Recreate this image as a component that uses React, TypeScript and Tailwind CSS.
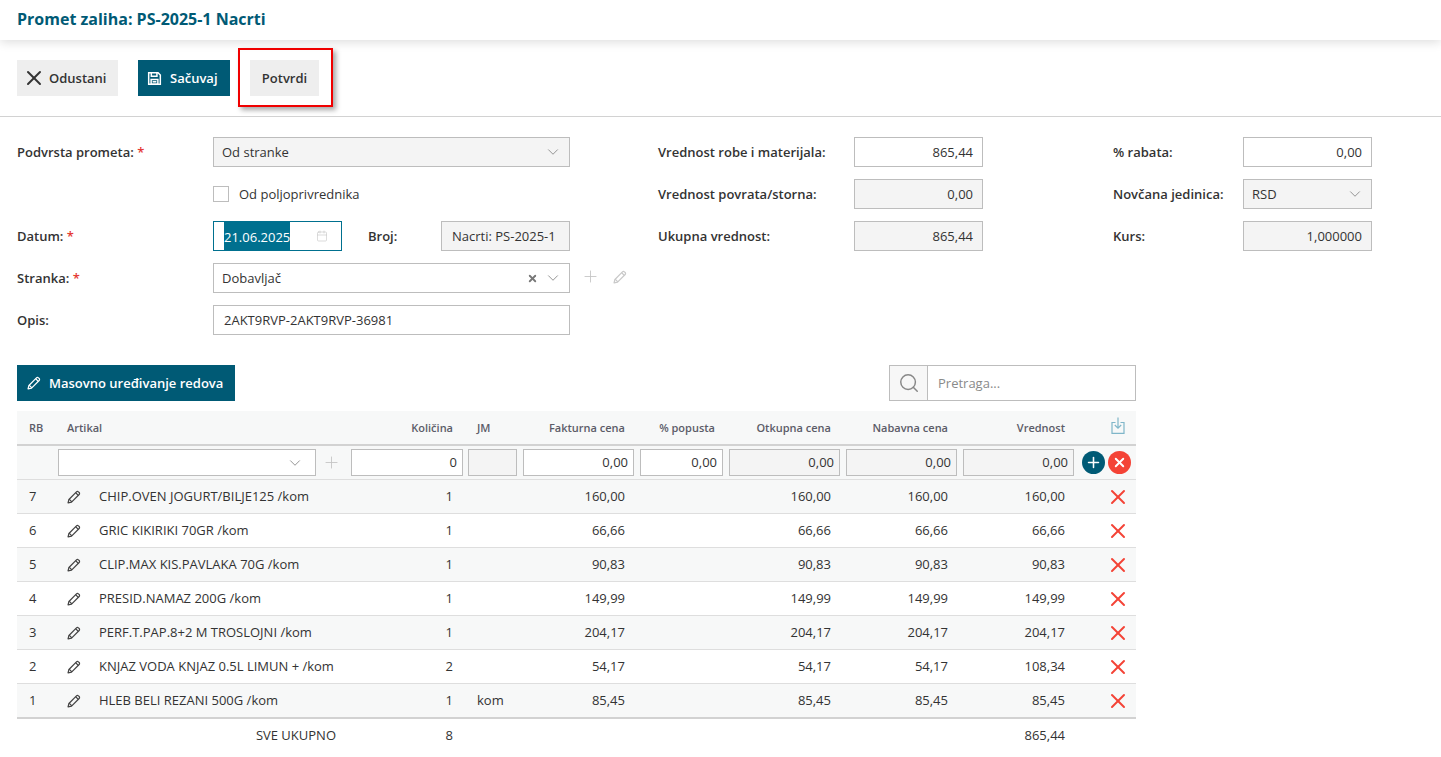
import React from "react";
import { ChevronDown, Plus, Calendar, Search, X } from "lucide-react";

const Pencil = ({ className = "" }: { className?: string }) => (
  <svg viewBox="0 0 16 16" width="14" height="14" fill="none" stroke="currentColor" strokeWidth="1.4" strokeLinejoin="round" className={`shrink-0 ${className}`}>
    <path d="M1.2 14.8l1-4 8.6-8.7c.7-.7 1.7-.7 2.3 0l.8.8c.6.6.6 1.6 0 2.2l-8.7 8.7z" />
    <path d="M2.4 10.4l3.2 3.2M9.9 3.2l3 3" />
  </svg>
);

const SaveIcon = () => (
  <svg viewBox="0 0 16 16" width="15" height="15" fill="none" stroke="currentColor" strokeWidth="1.6">
    <path d="M1.8 1.8h10l2.4 2.4v10H1.8z" />
    <path d="M4.6 2v3.6h6V2M4.4 9h7.2v5H4.4z" />
    <path d="M6 11.5h4" />
  </svg>
);

const Label = ({ children, req }: { children: React.ReactNode; req?: boolean }) => (
  <span className="block pt-[2px] font-semibold text-[13px] text-[#333]">
    {children}
    {req && <span className="text-[#e53935]"> *</span>}
  </span>
);

const Field = ({ value, gray, className = "" }: { value: string; gray?: boolean; className?: string }) => (
  <div className={`h-[30px] border border-[#bdbdbd] flex items-center justify-end px-[9px] pt-[2px] text-[13px] text-[#333] ${gray ? "bg-[#f4f4f4]" : "bg-white"} ${className}`}>
    {value}
  </div>
);

const Chevron = () => <ChevronDown size={18} strokeWidth={1.2} className="text-[#8a8a8a] shrink-0" />;

const rows = [
  ["7", "CHIP.OVEN JOGURT/BILJE125 /kom", "1", "", "160,00", "160,00", "160,00", "160,00"],
  ["6", "GRIC KIKIRIKI 70GR /kom", "1", "", "66,66", "66,66", "66,66", "66,66"],
  ["5", "CLIP.MAX KIS.PAVLAKA 70G /kom", "1", "", "90,83", "90,83", "90,83", "90,83"],
  ["4", "PRESID.NAMAZ 200G /kom", "1", "", "149,99", "149,99", "149,99", "149,99"],
  ["3", "PERF.T.PAP.8+2 M TROSLOJNI /kom", "1", "", "204,17", "204,17", "204,17", "204,17"],
  ["2", "KNJAZ VODA KNJAZ 0.5L LIMUN + /kom", "2", "", "54,17", "54,17", "54,17", "108,34"],
  ["1", "HLEB BELI REZANI 500G /kom", "1", "kom", "85,45", "85,45", "85,45", "85,45"],
];

const gridCols = "grid grid-cols-[38px_293px_118px_54px_117px_89px_117px_117px_117px_59px] items-center";

const MiniInput = ({ value, gray, className = "" }: { value?: string; gray?: boolean; className?: string }) => (
  <div className={`h-[27px] border border-[#bdbdbd] flex items-center justify-end pr-[5px] text-[13px] text-[#333] ${gray ? "bg-[#f4f4f4]" : "bg-white"} ${className}`}>
    {value}
  </div>
);

export default function App() {
  return (
    <div className="relative w-[1441px] h-[757px] overflow-hidden bg-white font-['Open_Sans',sans-serif] text-[13px] text-[#333]">
      {/* Title bar */}
      <header className="h-10 flex items-center pl-[17px] bg-white shadow-[0_2px_10px_rgba(0,0,0,0.14)] relative">
        <h1 className="font-bold text-[16px] text-[#005a75] -mt-[2px]">Promet zaliha: PS-2025-1 Nacrti</h1>
      </header>

      {/* Toolbar */}
      <div className="h-[77px] pl-[17px] pt-5 border-b border-[#d2d2d2] flex items-start">
        <button className="h-9 w-[101px] bg-[#eeeeee] flex items-center pl-[5px] gap-[3px] font-semibold text-[13px] text-[#333]">
          <X size={24} strokeWidth={2} className="text-[#333]" />
          <span className="pt-[2px]">Odustani</span>
        </button>
        <button className="h-9 w-[92px] ml-5 bg-[#005a75] flex items-center pl-[9px] gap-[8px] font-semibold text-[13px] text-white">
          <SaveIcon />
          <span className="pt-[2px]">Sačuvaj</span>
        </button>
        <div className="relative ml-5">
          <button className="h-9 w-[69px] bg-[#eeeeee] flex items-center justify-center pt-[2px] font-semibold text-[13px] text-[#333]">
            Potvrdi
          </button>
          <div className="absolute -left-[12px] -top-[12px] w-[95px] h-[59px] border-[2px] border-[#f00000] shadow-[3px_3px_5px_rgba(0,0,0,0.35)]" />
        </div>
      </div>

      {/* Form */}
      <div className="pl-[17px] pt-5 flex items-start">
        {/* Left column */}
        <div className="w-[641px] flex flex-col gap-3">
          <div className="flex items-center h-[30px]">
            <div className="w-[196px]"><Label req>Podvrsta prometa:</Label></div>
            <div className="w-[357px] h-[30px] border border-[#bdbdbd] bg-[#f4f4f4] flex items-center justify-between pl-2 pr-[7px]">
              <span className="pt-[2px]">Od stranke</span>
              <Chevron />
            </div>
          </div>
          <div className="flex items-center h-[30px]">
            <div className="w-[196px]" />
            <div className="w-4 h-4 border border-[#bdbdbd] bg-white" />
            <span className="ml-[10px] pt-[2px]">Od poljoprivrednika</span>
          </div>
          <div className="flex items-center h-[30px]">
            <div className="w-[196px]"><Label req>Datum:</Label></div>
            <div className="w-[129px] h-[30px] border border-[#00708f] bg-white flex items-center pl-[10px] pr-[13px] justify-between">
              <span className="bg-[#00708f] text-white h-[28px] leading-[30px] w-[66px] overflow-hidden whitespace-nowrap">21.06.2025</span>
              <Calendar size={12} strokeWidth={1.2} className="text-[#c4c4c4]" />
            </div>
            <div className="w-[99px] pl-[26px]"><Label>Broj:</Label></div>
            <div className="w-[129px] h-[30px] border border-[#bdbdbd] bg-[#f4f4f4] flex items-center pl-[10px] pt-[2px] whitespace-nowrap">Nacrti: PS-2025-1</div>
          </div>
          <div className="flex items-center h-[30px]">
            <div className="w-[196px]"><Label req>Stranka:</Label></div>
            <div className="w-[357px] h-[30px] border border-[#bdbdbd] bg-white flex items-center pl-2 pr-[7px]">
              <span className="flex-1 pt-[2px]">Dobavljač</span>
              <X size={11} strokeWidth={4} className="text-[#777] mr-[6px] mt-[1px]" />
              <Chevron />
            </div>
            <Plus size={19} strokeWidth={1.1} className="ml-[11px] -mt-[3px] text-[#c4c4c4]" />
            <Pencil className="ml-[13px] -mt-[3px] text-[#c9c9c9]" />
          </div>
          <div className="flex items-center h-[30px]">
            <div className="w-[196px]"><Label>Opis:</Label></div>
            <div className="w-[357px] h-[30px] border border-[#bdbdbd] bg-white flex items-center pl-[10px] pt-[2px]">2AKT9RVP-2AKT9RVP-36981</div>
          </div>
        </div>

        {/* Middle column */}
        <div className="w-[455px] flex flex-col gap-3">
          <div className="flex items-center"><div className="w-[196px]"><Label>Vrednost robe i materijala:</Label></div><Field value="865,44" className="w-[129px]" /></div>
          <div className="flex items-center"><div className="w-[196px]"><Label>Vrednost povrata/storna:</Label></div><Field value="0,00" gray className="w-[129px]" /></div>
          <div className="flex items-center"><div className="w-[196px]"><Label>Ukupna vrednost:</Label></div><Field value="865,44" gray className="w-[129px]" /></div>
        </div>

        {/* Right column */}
        <div className="flex flex-col gap-3">
          <div className="flex items-center"><div className="w-[130px]"><Label>% rabata:</Label></div><Field value="0,00" className="w-[129px]" /></div>
          <div className="flex items-center">
            <div className="w-[130px]"><Label>Novčana jedinica:</Label></div>
            <div className="w-[129px] h-[30px] border border-[#bdbdbd] bg-[#f4f4f4] flex items-center justify-between pl-2 pr-[7px]">
              <span className="pt-[2px]">RSD</span>
              <Chevron />
            </div>
          </div>
          <div className="flex items-center"><div className="w-[130px]"><Label>Kurs:</Label></div><Field value="1,000000" gray className="w-[129px]" /></div>
        </div>
      </div>

      {/* Table section */}
      <div className="ml-[17px] w-[1119px] mt-[30px]">
        <div className="flex items-start justify-between h-[46px]">
          <button className="h-9 w-[218px] bg-[#005a75] flex items-center pl-[10px] gap-[8px] font-semibold text-[13px] text-white">
            <Pencil className="text-white" />
            <span className="pt-[2px]">Masovno uređivanje redova</span>
          </button>
          <div className="w-[247px] h-9 border border-[#bdbdbd] flex">
            <div className="w-[38px] border-r border-[#bdbdbd] bg-[#f7f7f7] flex items-center justify-center">
              <Search size={22} strokeWidth={1.6} className="text-[#888]" />
            </div>
            <div className="flex-1 flex items-center pl-[10px] pt-[2px] text-[#8a8a8a]">Pretraga...</div>
          </div>
        </div>

        {/* Header */}
        <div className={`${gridCols} h-[35px] pt-[2px] bg-[#f7f8f8] border-b-[2px] border-[#d2d2d2] text-[11px] font-semibold text-[#5c5c68]`}>
          <div className="pl-3">RB</div>
          <div className="pl-3">Artikal</div>
          <div className="text-right pr-[13px]">Količina</div>
          <div className="pl-[11px]">JM</div>
          <div className="text-right pr-3">Fakturna cena</div>
          <div className="text-right pr-[11px]">% popusta</div>
          <div className="text-right pr-3">Otkupna cena</div>
          <div className="text-right pr-3">Nabavna cena</div>
          <div className="text-right pr-3">Vrednost</div>
          <div className="flex justify-end pr-[11px] -mt-[7px]">
            <svg viewBox="0 0 14 17" width="14" height="17" fill="none" stroke="#7fb6c9" strokeWidth="1.2">
              <path d="M4.5 5.5H1v10.8h12V5.5H9.5" />
              <path d="M7 .5v10.5M3.8 8L7 11.2 10.2 8" />
            </svg>
          </div>
        </div>

        {/* Input row */}
        <div className={`${gridCols} h-[34px] bg-[#f7f8f8] border-b border-[#dedede]`}>
          <div />
          <div className="flex items-center pl-[3px]">
            <div className="w-[258px] h-[27px] border border-[#bdbdbd] bg-white flex items-center justify-end pr-[11px]">
              <Chevron />
            </div>
            <Plus size={19} strokeWidth={1.1} className="ml-[6px] text-[#c4c4c4]" />
          </div>
          <div className="px-[3px]"><MiniInput value="0" /></div>
          <div className="px-[2px]"><MiniInput gray className="w-[49px]" /></div>
          <div className="px-[3px]"><MiniInput value="0,00" /></div>
          <div className="px-[3px]"><MiniInput value="0,00" /></div>
          <div className="px-[3px]"><MiniInput value="0,00" gray /></div>
          <div className="px-[3px]"><MiniInput value="0,00" gray /></div>
          <div className="px-[3px]"><MiniInput value="0,00" gray /></div>
          <div className="flex items-center pl-[5px] gap-[3px]">
            <span className="w-[23px] h-[23px] rounded-full bg-[#005a75] flex items-center justify-center">
              <Plus size={17} strokeWidth={2.2} className="text-white" />
            </span>
            <span className="w-[23px] h-[23px] rounded-full bg-[#f44336] flex items-center justify-center">
              <X size={15} strokeWidth={3} className="text-white" />
            </span>
          </div>
        </div>

        {/* Rows */}
        {rows.map((r, i) => (
          <div key={r[0]} className={`${gridCols} ${i % 2 === 0 ? "bg-[#f7f8f8]" : "bg-white"} ${i === rows.length - 1 ? "h-[35px] border-b-[2px] border-[#d2d2d2]" : "h-[34px] border-b border-[#dedede]"}`}>
            <div className="pl-3">{r[0]}</div>
            <div className="flex items-center pl-3 gap-[18px] whitespace-nowrap">
              <Pencil className="text-[#444]" />
              {r[1]}
            </div>
            <div className="text-right pr-[13px]">{r[2]}</div>
            <div className="pl-[11px]">{r[3]}</div>
            <div className="text-right pr-3">{r[4]}</div>
            <div />
            <div className="text-right pr-3">{r[5]}</div>
            <div className="text-right pr-3">{r[6]}</div>
            <div className="text-right pr-3">{r[7]}</div>
            <div className="flex justify-end pr-[6px]">
              <X size={24} strokeWidth={2} className="text-[#f44336] shrink-0" />
            </div>
          </div>
        ))}

        {/* Total */}
        <div className={`${gridCols} h-[34px]`}>
          <div />
          <div className="text-right pr-[12px]">SVE UKUPNO</div>
          <div className="text-right pr-[13px]">8</div>
          <div /><div /><div /><div /><div />
          <div className="text-right pr-3">865,44</div>
          <div />
        </div>
      </div>
    </div>
  );
}
